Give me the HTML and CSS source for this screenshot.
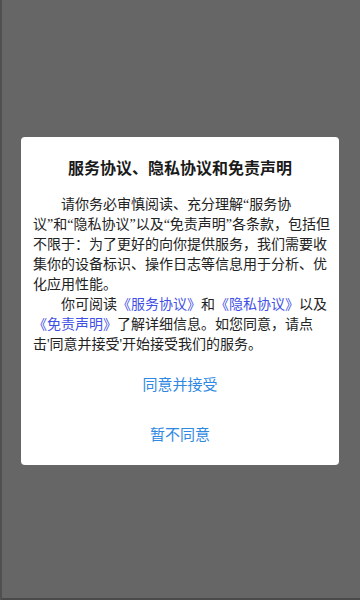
FILE: index.html
```html
<!DOCTYPE html>
<html lang="zh-CN">
<head>
    <meta charset="UTF-8">
    <meta name="viewport" content="width=device-width, initial-scale=1.0">
    <title>服务协议</title>
    <link rel="stylesheet" href="styles.css">
</head>
<body>
    <!-- 协议弹窗 -->
    <div class="dialog">
        <h2 class="dialog-title">服务协议、隐私协议和免责声明</h2>
        <div class="dialog-body">
            <p>请你务必审慎阅读、充分理解“服务协<span class="nobr">议”和“隐</span>私协议”以及“免责声明”各条款，包括但不限于：为了更好的向你提供服务，我们需要收集你的设备标识、操作日志等信息用于分析、优化应用性能。</p>
            <p>你可阅读<a href="#" class="link">《服务协议》</a>和<a href="#" class="link">《隐私协议》</a>以及<a href="#" class="link">《免责声明》</a>了解详细信息。如您同意，请点击'同意并接受'开始接受我们的服务。</p>
        </div>
        <button class="dialog-btn">同意并接受</button>
        <button class="dialog-btn">暂不同意</button>
    </div>
</body>
</html>
```

FILE: styles.css
```css
body {
    font-family: "Liberation Serif", "Noto Sans CJK SC", sans-serif;
    margin: 0;
    padding-top: 2px;
    height: 100vh;
    box-sizing: border-box;
    display: flex;
    justify-content: center;
    align-items: center;
    background-color: #666666; /* 遮罩 */
    box-shadow: inset 2px 0 #505050, inset 0 -2px #4a4a4a;
}

.dialog {
    width: 318px;
    box-sizing: border-box;
    padding: 20px 0 7px 0;
    background-color: white;
    border-radius: 4px;
    display: flex;
    flex-direction: column;
}

.dialog-title {
    margin: 0 0 14px;
    font-size: 16px;
    line-height: 24px;
    font-weight: bold;
    color: #1a1a1a;
    text-align: center;
}

.dialog-body {
    padding: 0 8px 0 12px; /* 正文宽 298px */
}

.dialog-body p {
    margin: 0;
    font-size: 14px;
    line-height: 20px;
    color: #222;
    text-indent: 2em;
}

/* 保持与原换行一致 */
.nobr {
    white-space: nowrap;
}

.link {
    color: #3f4fe6;
    text-decoration: none;
}

.dialog-btn {
    height: 50px;
    border: none;
    background: none;
    font-family: inherit;
    font-size: 15px;
    color: #2f88e2;
    cursor: pointer;
}

.dialog-btn:first-of-type {
    margin-top: 3px;
}
```
